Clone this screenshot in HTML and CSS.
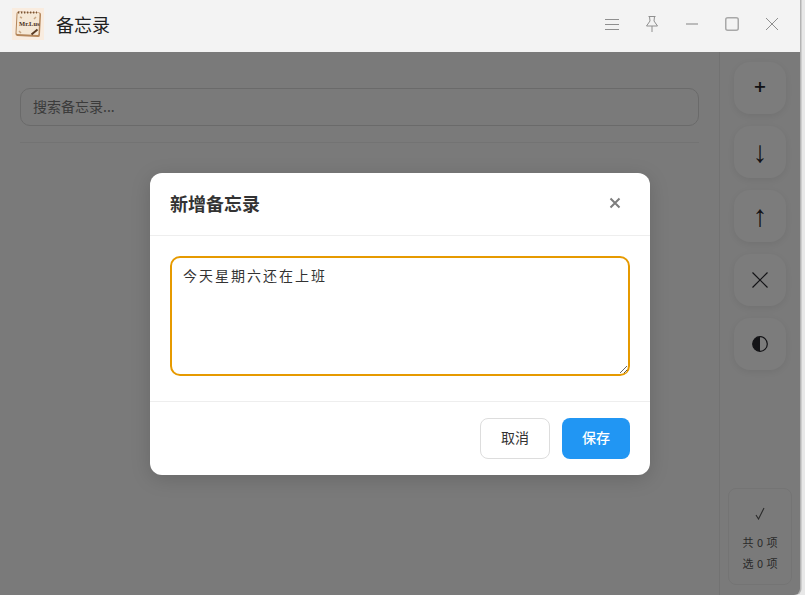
FILE: index.html
```html
<!DOCTYPE html>
<html lang="zh-CN">
<head>
<meta charset="utf-8">
<title>备忘录</title>
<link rel="stylesheet" href="styles.css">
</head>
<body>
<div class="window">
  <header class="titlebar">
    <div class="logo">
      <svg width="32" height="32" viewBox="0 0 32 32">
        <rect width="32" height="32" fill="#f9ecdf"/>
        <rect x="4" y="4" width="24.500" height="24.500" rx="2" fill="#b5865a" transform="rotate(3 16 16)"/>
        <rect x="5" y="4.500" width="22" height="22" rx="1" fill="#f5e8d6" transform="rotate(3 16 16)"/>
        <path d="M6 4.500h19" stroke="#7a5434" stroke-width="2" stroke-dasharray="1.300 1.700"/>
        <text x="7" y="18" class="logo-text">Mr.Lus</text>
        <path d="M19.500 26.500l6-5" stroke="#5a3a22" stroke-width="2"/>
        <path d="M7 23l2 2M8 9l2 1M24 9l-2 2" stroke="#c7a684" stroke-width="1.500"/>
      </svg>
    </div>
    <span class="app-title">备忘录</span>
    <div class="win-controls">
      <span class="win-btn">
        <svg width="16" height="16" viewBox="0 0 16 16"><path d="M1 3.500h14M1 8.500h14M1 13.500h14" class="ln"/></svg>
      </span>
      <span class="win-btn">
        <svg width="16" height="18" viewBox="0 0 16 18"><path d="M4.500 1.500h7M5.500 1.500l.5 4.500L2.500 11h11L10 6l.5-4.500M8 11v6" class="ln"/></svg>
      </span>
      <span class="win-btn">
        <svg width="16" height="16" viewBox="0 0 16 16"><path d="M2 8h12" class="ln thick"/></svg>
      </span>
      <span class="win-btn">
        <svg width="16" height="16" viewBox="0 0 16 16"><rect x="1.750" y="1.750" width="12.500" height="12.500" rx="2" class="ln thick"/></svg>
      </span>
      <span class="win-btn">
        <svg width="16" height="16" viewBox="0 0 16 16"><path d="M2 2l12 12M14 2L2 14" class="ln"/></svg>
      </span>
    </div>
  </header>

  <div class="body">
    <main class="main">
      <input class="search" type="text" placeholder="搜索备忘录...">
      <div class="divider"></div>
    </main>
    <aside class="side">
      <button class="tool plus">+</button>
      <button class="tool arrow">↓</button>
      <button class="tool arrow">↑</button>
      <button class="tool">
        <svg width="18" height="18" viewBox="0 0 18 18"><path d="M1.500 1.500l15 15M16.500 1.500l-15 15" class="dk"/></svg>
      </button>
      <button class="tool">
        <svg width="16" height="16" viewBox="0 0 16 16"><circle cx="8" cy="8" r="7.300" class="dk"/><path d="M8 .7a7.300 7.300 0 0 0 0 14.600z" fill="#26262c"/></svg>
      </button>
      <div class="stats">
        <svg class="check" width="12" height="14" viewBox="0 0 12 14"><path d="M2 9l2.500 4L10 2"/></svg>
        <div class="stat">共 0 项</div>
        <div class="stat">选 0 项</div>
      </div>
    </aside>
    <div class="overlay">
      <section class="dialog">
        <div class="dlg-head">
          <h2 class="dlg-title">新增备忘录</h2>
          <svg class="dlg-close" width="12" height="12" viewBox="0 0 12 12"><path d="M1.500 1.500l9 9M10.500 1.500l-9 9"/></svg>
        </div>
        <div class="dlg-body">
          <textarea class="memo">今天星期六还在上班</textarea>
        </div>
        <div class="dlg-foot">
          <button class="btn cancel">取消</button>
          <button class="btn save">保存</button>
        </div>
      </section>
    </div>
  </div>
</div>
</body>
</html>
```

FILE: styles.css
```css
* { box-sizing: border-box; }
html, body { margin: 0; height: 100%; background: #e8e8e8; overflow: hidden; }
body { font-family: "Liberation Sans", "Noto Sans CJK SC", sans-serif; color: #333; }

.window { width: 800px; height: 595px; display: flex; flex-direction: column; background: #f5f5f5; border-bottom-right-radius: 6px; overflow: hidden; box-shadow: 1.500px 0 0 #b4b4b4; }

.titlebar { height: 52px; flex: none; display: flex; align-items: center; background: #f3f3f3; padding: 0 8px 4px 12px; }
.logo { width: 32px; height: 32px; display: flex; }
.logo-text { font: 700 6.500px "Liberation Serif", serif; fill: #4a2f1a; }
.app-title { margin-left: 12px; font-size: 18px; color: #1f1f1f; font-family: "Noto Sans CJK SC", sans-serif; }
.win-controls { margin-left: auto; display: flex; }
.win-btn { width: 40px; height: 40px; display: flex; align-items: center; justify-content: center; }
.ln { fill: none; stroke: #8f8f8f; stroke-width: 1; }
.thick { stroke: #a8a8a8; stroke-width: 1.500; }

.body { flex: 1; position: relative; display: flex; min-height: 0; }
.main { flex: 1; padding: 36px 20px 0; }
.search { display: block; width: 100%; height: 38px; padding: 0 12px 2px; border: 1px solid #d4d4d4; border-radius: 10px; background: #f5f5f5; font: 14px "Noto Sans CJK SC", sans-serif; outline: none; }
.search::placeholder { color: #777; opacity: 1; }
.divider { height: 1px; background: #e6e6e6; margin-top: 16px; }

.side { width: 81px; flex: none; border-left: 1px solid #e4e4e4; display: flex; flex-direction: column; align-items: center; padding: 10px 0 10px; gap: 12px; }
.tool { width: 52px; height: 52px; flex: none; border: none; border-radius: 16px; background: #f8f8f8; box-shadow: 0 2px 8px rgba(0,0,0,.08); display: flex; align-items: center; justify-content: center; padding: 0; color: #26262c; font-family: "DejaVu Sans", sans-serif; }
.plus { font-size: 16px; font-weight: 700; padding-bottom: 4px; }
.arrow { font-size: 30px; font-family: "Liberation Sans", sans-serif; }
.dk { fill: none; stroke: #26262c; stroke-width: 1.200; }
.stats { margin-top: auto; width: 64px; height: 97px; border: 1px solid #e8e8e8; border-radius: 8px; display: flex; flex-direction: column; align-items: center; padding-top: 17px; font-family: "Noto Sans CJK SC", sans-serif; }
.check { flex: none; fill: none; stroke: #555; stroke-width: 1.100; margin-bottom: 12px; }
.stat { font-size: 11px; line-height: 21px; color: #555; word-spacing: 1px; }

.overlay { position: absolute; inset: 0; display: flex; justify-content: center; padding-top: 121px; background: rgba(0,0,0,.5); }

.dialog { width: 500px; height: 302px; background: #fff; border-radius: 12px; box-shadow: 0 4px 20px rgba(0,0,0,.15); display: flex; flex-direction: column; }
.dlg-head { height: 63px; flex: none; border-bottom: 1px solid #eee; display: flex; align-items: center; justify-content: space-between; padding: 0 29px 2px 20px; }
.dlg-title { margin: 0; font-size: 18px; font-weight: 700; color: #333; font-family: "Noto Sans CJK SC", sans-serif; }
.dlg-close { fill: none; stroke: #7d7d7d; stroke-width: 2; }
.dlg-body { height: 166px; flex: none; border-bottom: 1px solid #eee; padding: 20px; }
.memo { display: block; width: 100%; height: 120px; border: 2px solid #e69a00; border-radius: 10px; padding: 8px 11px; font: 14px/1.4 "Noto Sans CJK SC", sans-serif; letter-spacing: 2px; color: #333; outline: none; background: #fff; }
.dlg-foot { flex: 1; display: flex; justify-content: flex-end; align-items: flex-start; gap: 12px; padding: 16px 20px 0; }
.btn { height: 41px; border-radius: 8px; font: 14px "Noto Sans CJK SC", sans-serif; padding: 0 0 3px; }
.cancel { width: 70px; background: #fff; border: 1px solid #ddd; color: #333; }
.save { width: 68px; background: #2196f3; border: none; color: #fff; font-weight: 500; }
```
